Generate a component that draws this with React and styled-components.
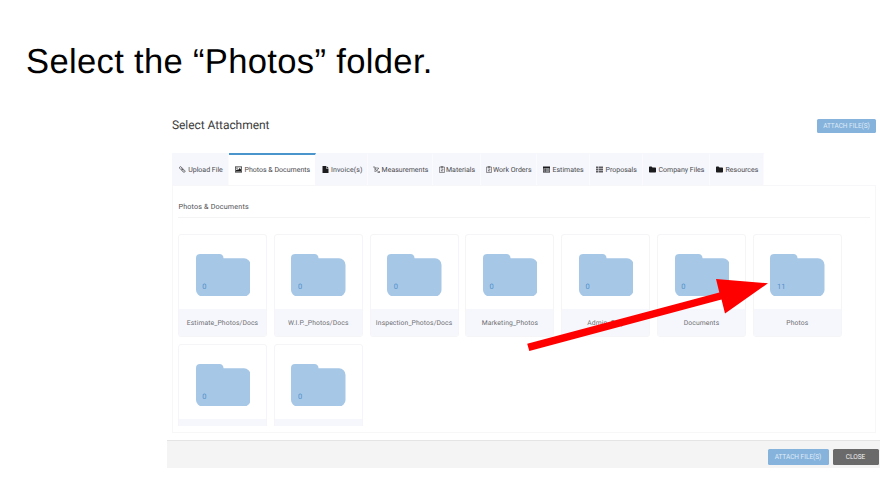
import React from "react";
import styled, { createGlobalStyle } from "styled-components";

const GlobalStyle = createGlobalStyle`
  * { box-sizing: border-box; }
  body { margin: 0; background: #fff; overflow: hidden; text-rendering: geometricPrecision; }
`;

const Slide = styled.main`
  position: relative;
  width: 889px;
  height: 490px;
  background: #fff;
  font-family: Roboto, "Liberation Sans", sans-serif;
  white-space: nowrap;
`;

const SlideTitle = styled.h1`
  margin: 0;
  height: 114px;
  padding: 42px 0 0 26px;
  font: 400 34.6px/40px "Liberation Sans", Arial, sans-serif;
  letter-spacing: 0.33px;
  color: #000;
`;

const Dialog = styled.section`
  width: 713px;
  height: 354px;
  margin-left: 167px;
  display: flex;
  flex-direction: column;
`;

const DialogHeader = styled.header`
  display: flex;
  justify-content: space-between;
  height: 39px;
  padding: 5px 4px 0 5px;
`;

const DialogTitle = styled.h2`
  margin: 0;
  font-weight: 400;
  font-size: 12px;
  line-height: 13px;
  letter-spacing: -0.06px;
  color: #3c3c3c;
`;

const Button = styled.button`
  display: flex;
  align-items: center;
  justify-content: center;
  width: ${(p) => p.$width}px;
  height: ${(p) => p.$height}px;
  padding: 0;
  border: 0;
  border-radius: 1.5px;
  background: ${(p) => (p.$dark ? "#6a6a6a" : "#86b3dc")};
  color: ${(p) => (p.$dark ? "#f2f2f2" : "#dfebf7")};
  font: 400 6.5px/8px Roboto, sans-serif;
  letter-spacing: ${(p) => (p.$dark ? 0 : -0.02)}px;
`;

const Tabs = styled.nav`
  display: flex;
  height: 31.5px;
  margin-left: 5px;
`;

const Tab = styled.div`
  display: flex;
  align-items: center;
  flex: none;
  width: ${(p) => p.$width}px;
  padding-left: ${(p) => p.$pad}px;
  padding-bottom: 0.5px;
  border-top: 2px solid ${(p) => (p.$active ? "#4b95cd" : "#f6f7fc")};
  border-right: 1px solid ${(p) => (p.$active ? "#f6f7fc" : "#fbfbfe")};
  background: ${(p) => (p.$active ? "#fff" : "#f6f7fc")};
  color: #4a4a4e;
  font-size: 7px;
  line-height: 8px;
`;

const IconSlot = styled.span`
  display: flex;
  flex: none;
  width: ${(p) => p.$width}px;
  color: ${(p) => (p.$soft ? "#5c5c60" : "#1c1c1e")};
  svg { display: block; width: 7px; height: 7px; }
`;

const Label = styled.span`
  letter-spacing: ${(p) => p.$track || 0}px;
`;

const Panel = styled.div`
  width: 704px;
  height: 248.5px;
  margin-left: 5px;
  padding: 0 5px;
  border: 1px solid #f7f7f8;
  border-top-color: #f7f7f9;
`;

const PanelTitle = styled.h3`
  margin: 0;
  height: 32px;
  padding: 16.4px 0 0 0.5px;
  border-bottom: 1px solid #f4f4f5;
  font-weight: 400;
  font-size: 7.2px;
  line-height: 9px;
  letter-spacing: 0.16px;
  color: #505054;
`;

const FolderGrid = styled.div`
  display: grid;
  grid-template-columns: repeat(7, 89px);
  column-gap: 6.8px;
  row-gap: 7px;
  height: 208px;
  padding-top: 16.5px;
  overflow: hidden;
`;

const Card = styled.article`
  height: 103px;
  border: 1px solid #f5f5f7;
  border-radius: 3px;
  overflow: hidden;
`;

const CardBody = styled.div`
  height: 74.4px;
  padding: 18.6px 0 0 16.6px;
`;

const FolderShape = styled.div`
  position: relative;
  width: 54.5px;
  height: 42.5px;
  svg { display: block; width: 100%; height: 100%; }
`;

const Count = styled.span`
  position: absolute;
  left: 6.6px;
  top: 28.2px;
  font-size: 7.5px;
  line-height: 10px;
  color: #4f91ca;
`;

const CardName = styled.div`
  height: 28px;
  background: #f6f7fc;
  color: #6f6f73;
  text-align: center;
  font-size: 6.8px;
  line-height: 29.4px;
  letter-spacing: 0.1px;
`;

const DialogFooter = styled.footer`
  display: flex;
  justify-content: flex-end;
  gap: 4px;
  height: 28px;
  margin-top: auto;
  padding: 7.6px 1.5px 0 0;
  border-top: 1px solid #e4e4e4;
  background: #f4f4f4;
`;

const Arrow = styled.svg`
  position: absolute;
  left: 520px;
  top: 270px;
  width: 260px;
  height: 90px;
`;

const glyphs = {
  link: (
    <g fill="none" stroke="currentColor" strokeWidth="1.7">
      <rect x="2" y="1" width="4" height="7" rx="2" transform="rotate(-42 4 4.5)" />
      <rect x="7" y="6" width="4" height="7" rx="2" transform="rotate(-42 9 9.5)" />
      <path d="M5 5l4 4" />
    </g>
  ),
  image: (
    <>
      <path fillRule="evenodd" fill="currentColor" d="M0 1h14v12H0zM1.3 2.3v9.4h11.4V2.3z" />
      <path fill="currentColor" d="M2 11V8.5l2.5-2L6 8l3.6-4L12 6.8V11z" />
      <circle cx="4" cy="4.3" r="1.2" fill="currentColor" />
    </>
  ),
  file: <path fill="currentColor" d="M1 0h7v5h5v9H1zM9 0l4 4H9z" />,
  measure: (
    <g fill="none" stroke="currentColor" strokeWidth="1.4">
      <path d="M0 2h4v3M4 4h7v2M4 4v8M4 6l9 7M11 5L5 12M9 13h4v-3" />
    </g>
  ),
  clipboard: (
    <g fill="none" stroke="currentColor" strokeWidth="1.3">
      <path d="M1 2h10v11H1zM4 1h4v2H4zM3.5 6h5M3.5 10h5M4 8l1.5 1.5L8.5 6" />
    </g>
  ),
  table: (
    <>
      <path fillRule="evenodd" fill="currentColor" d="M0 1h14v12H0zM1.3 4.5v7.2h11.4V4.5z" />
      <path stroke="currentColor" strokeWidth="1.2" d="M2 6h10M2 8h10M2 10h10M4.5 5v7" />
    </>
  ),
  list: <path fill="currentColor" d="M0 1h4v3.4H0zM5 1h9v3.4H5zM0 5.3h4v3.4H0zM5 5.3h9v3.4H5zM0 9.6h4V13H0zM5 9.6h9V13H5z" />,
  folder: <path fill="currentColor" d="M1.5 1H5l2 2h5.5Q14 3 14 4.5V11.5Q14 13 12.5 13H1.5Q0 13 0 11.5V2.5Q0 1 1.5 1z" />,
};

const tabs = [
  { text: "Upload File", icon: "link", soft: true, width: 57, pad: 7, slot: 9.2 },
  { text: "Photos & Documents", icon: "image", width: 87, pad: 5.5, slot: 10, active: true },
  { text: "Invoice(s)", icon: "file", width: 51.5, pad: 5.5, slot: 9.5, track: 0.08 },
  { text: "Measurements", icon: "measure", soft: true, width: 65.5, pad: 5.5, slot: 8.6 },
  { text: "Materials", icon: "clipboard", soft: true, width: 47.5, pad: 6, slot: 7 },
  { text: "Work Orders", icon: "clipboard", soft: true, width: 56, pad: 5.5, slot: 7 },
  { text: "Estimates", icon: "table", width: 53, pad: 6.5, slot: 9.5 },
  { text: "Proposals", icon: "list", soft: true, width: 53, pad: 6.5, slot: 9.5 },
  { text: "Company Files", icon: "folder", width: 67, pad: 6.5, slot: 9.5 },
  { text: "Resources", icon: "folder", width: 54, pad: 6.5, slot: 9.5 },
];

const folders = [
  { name: "Estimate_Photos/Docs", count: 0 },
  { name: "W.I.P._Photos/Docs", count: 0 },
  { name: "Inspection_Photos/Docs", count: 0 },
  { name: "Marketing_Photos", count: 0 },
  { name: "Admin_Only", count: 0 },
  { name: "Documents", count: 0 },
  { name: "Photos", count: 11 },
  { name: "", count: 0 },
  { name: "", count: 0 },
];

function FolderCard({ name, count }) {
  return (
    <Card>
      <CardBody>
        <FolderShape>
          <svg viewBox="0 0 54.5 42.5" aria-hidden="true">
            <path
              fill="#a7c7e6"
              d="M4 0H23.5A4 4 0 0 1 27.5 4.3H48A6.5 6.5 0 0 1 54.5 10.8V36A6.5 6.5 0 0 1 48 42.5H6.5A6.5 6.5 0 0 1 0 36V4A4 4 0 0 1 4 0Z"
            />
          </svg>
          <Count>{count}</Count>
        </FolderShape>
      </CardBody>
      <CardName>{name}</CardName>
    </Card>
  );
}

export default function App() {
  return (
    <>
      <GlobalStyle />
      <Slide>
        <SlideTitle>Select the “Photos” folder.</SlideTitle>
        <Dialog>
          <DialogHeader>
            <DialogTitle>Select Attachment</DialogTitle>
            <Button $width={59} $height={13.5}>ATTACH FILE(S)</Button>
          </DialogHeader>
          <Tabs>
            {tabs.map((t) => (
              <Tab key={t.text} $width={t.width} $pad={t.pad} $active={t.active}>
                <IconSlot $width={t.slot} $soft={t.soft}>
                  <svg viewBox="0 0 14 14" aria-hidden="true">{glyphs[t.icon]}</svg>
                </IconSlot>
                <Label $track={t.track}>{t.text}</Label>
              </Tab>
            ))}
          </Tabs>
          <Panel>
            <PanelTitle>Photos &amp; Documents</PanelTitle>
            <FolderGrid>
              {folders.map((f, i) => (
                <FolderCard key={i} {...f} />
              ))}
            </FolderGrid>
          </Panel>
          <DialogFooter>
            <Button $width={61} $height={16.5}>ATTACH FILE(S)</Button>
            <Button $width={46} $height={16.5} $dark>CLOSE</Button>
          </DialogFooter>
        </Dialog>
        <Arrow viewBox="520 270 260 90" aria-hidden="true">
          <path fill="#f00" d="M527.2 343.7L719.3 292.5L716 279L768 283.3L725 313.5L721.5 299.5L529.3 351Z" />
        </Arrow>
      </Slide>
    </>
  );
}
